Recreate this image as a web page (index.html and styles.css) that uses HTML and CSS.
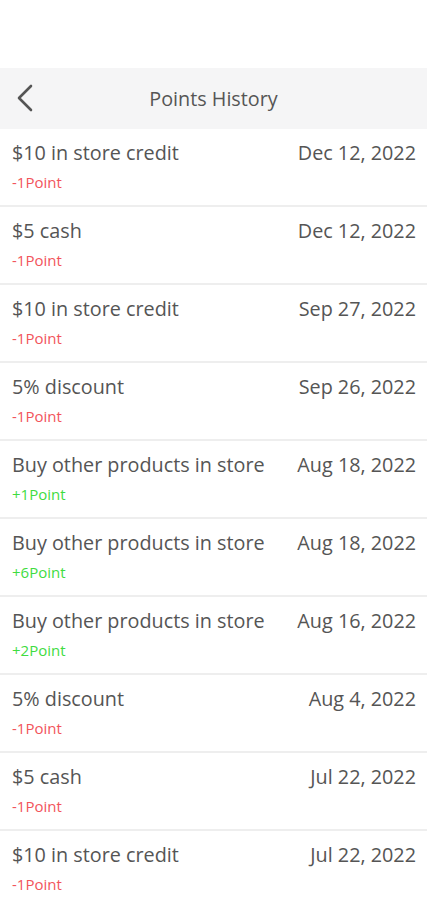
FILE: index.html
```html
<!DOCTYPE html>
<html lang="en">
<head>
    <meta charset="UTF-8">
    <meta name="viewport" content="width=device-width, initial-scale=1.0">
    <title>Points History</title>
    <link rel="stylesheet" href="styles.css">
</head>
<body>
    <div class="status-space"></div>
    <div class="header">
        <svg class="back" width="22" height="30" viewBox="0 0 22 30">
            <path d="M17 3 L5 15 L17 27" fill="none" stroke="#555" stroke-width="2.6" stroke-linecap="round" stroke-linejoin="round"/>
        </svg>
        <h1>Points History</h1>
    </div>

    <div class="list">
        <div class="row"><div class="info"><div class="name">$10 in store credit</div><div class="pts minus">-1Point</div></div><div class="date">Dec 12, 2022</div></div>
        <div class="row"><div class="info"><div class="name">$5 cash</div><div class="pts minus">-1Point</div></div><div class="date">Dec 12, 2022</div></div>
        <div class="row"><div class="info"><div class="name">$10 in store credit</div><div class="pts minus">-1Point</div></div><div class="date">Sep 27, 2022</div></div>
        <div class="row"><div class="info"><div class="name">5% discount</div><div class="pts minus">-1Point</div></div><div class="date">Sep 26, 2022</div></div>
        <div class="row"><div class="info"><div class="name">Buy other products in store</div><div class="pts plus">+1Point</div></div><div class="date">Aug 18, 2022</div></div>
        <div class="row"><div class="info"><div class="name">Buy other products in store</div><div class="pts plus">+6Point</div></div><div class="date">Aug 18, 2022</div></div>
        <div class="row"><div class="info"><div class="name">Buy other products in store</div><div class="pts plus">+2Point</div></div><div class="date">Aug 16, 2022</div></div>
        <div class="row"><div class="info"><div class="name">5% discount</div><div class="pts minus">-1Point</div></div><div class="date">Aug 4, 2022</div></div>
        <div class="row"><div class="info"><div class="name">$5 cash</div><div class="pts minus">-1Point</div></div><div class="date">Jul 22, 2022</div></div>
        <div class="row"><div class="info"><div class="name">$10 in store credit</div><div class="pts minus">-1Point</div></div><div class="date">Jul 22, 2022</div></div>
    </div>
</body>
</html>
```

FILE: styles.css
```css
body {
    margin: 0;
    font-family: "Open Sans", "Noto Sans", sans-serif;
    background-color: #ffffff;
    color: #555555;
}
.status-space {
    height: 68px;
}
.header {
    position: relative;
    height: 61px;
    background-color: #f5f5f6;
    display: flex;
    align-items: center;
    justify-content: center;
}
.header .back {
    position: absolute;
    left: 14px;
    top: 15px;
}
.header h1 {
    margin: 0;
    font-size: 19.8px;
    font-weight: 400;
    color: #555555;
}
.row {
    display: flex;
    justify-content: space-between;
    align-items: flex-start;
    padding: 12px 11px 14px 12px;
    border-bottom: 2px solid #eeeeee;
}
.name, .date {
    font-size: 19.8px;
    line-height: 24px;
    color: #555555;
}
.pts {
    margin-top: 8px;
    font-size: 15px;
    line-height: 18px;
}
.minus {
    color: #f2545b;
}
.plus {
    color: #3fdc3f;
}
```
